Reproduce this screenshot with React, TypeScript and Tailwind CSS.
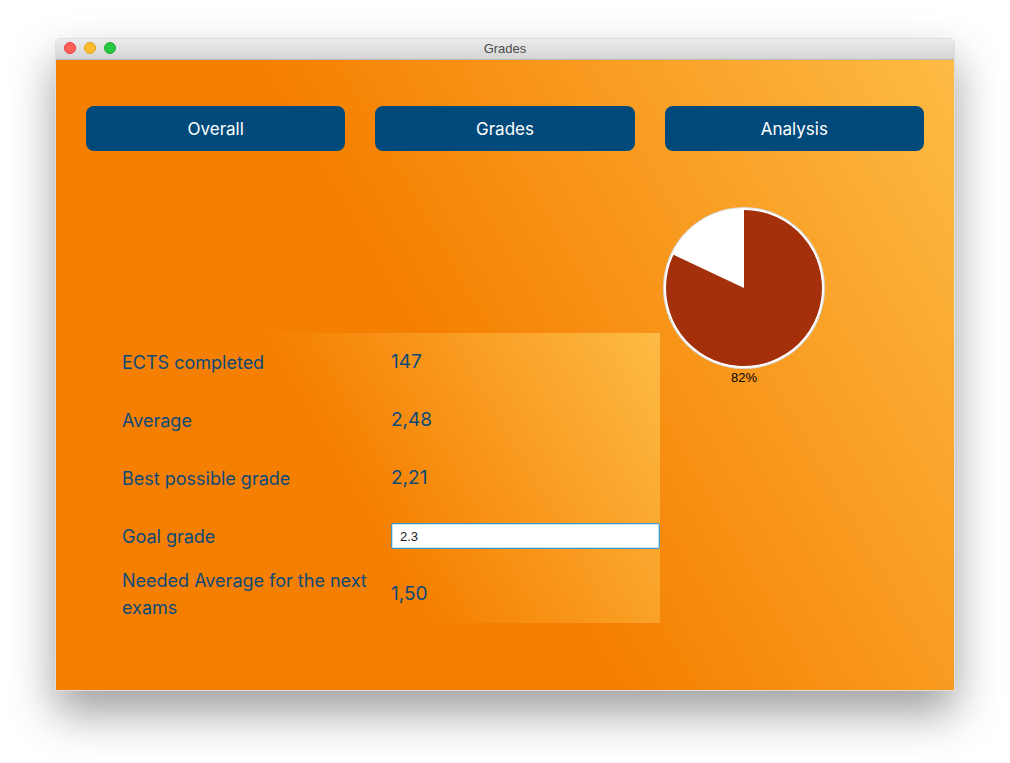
import React from 'react';

const rows: { label: string; value: string; input?: boolean }[] = [
  { label: 'ECTS completed', value: '147' },
  { label: 'Average', value: '2,48' },
  { label: 'Best possible grade', value: '2,21' },
  { label: 'Goal grade', value: '2.3', input: true },
  { label: 'Needed Average for the next exams', value: '1,50' },
];

const Pie: React.FC<{ pct: number }> = ({ pct }) => {
  const r = 78;
  const a = (pct / 100) * Math.PI * 2;
  const x = 82 + r * Math.sin(a);
  const y = 82 - r * Math.cos(a);
  const large = pct > 50 ? 1 : 0;
  return (
    <svg width="164" height="164" viewBox="0 0 164 164">
      <circle cx="82" cy="82" r="81" fill="#d9d9d9" />
      <circle cx="82" cy="82" r="80" fill="#ffffff" />
      <path d={`M82 82 L82 ${82 - r} A${r} ${r} 0 ${large} 1 ${x} ${y} Z`} fill="#a3300b" />
    </svg>
  );
};

export default function App() {
  return (
    <div className="w-[1010px] h-[763px] bg-white overflow-hidden font-['Inter',sans-serif]">
      <div className="ml-[55px] mt-[38px] w-[900px] rounded-t-[5px] overflow-hidden shadow-[0_22px_45px_rgba(0,0,0,0.38)] border border-[#c8c8c8]/60">
        {/* title bar */}
        <div className="relative h-[21px] bg-gradient-to-b from-[#ebebeb] to-[#d5d5d5] border-b border-[#b9b9b9] flex items-center justify-center">
          <div className="absolute left-[8px] top-[3px] flex gap-[8px]">
            <span className="w-[12px] h-[12px] rounded-full bg-[#fe5f57] border border-[#e0443e]" />
            <span className="w-[12px] h-[12px] rounded-full bg-[#febc2e] border border-[#dea123]" />
            <span className="w-[12px] h-[12px] rounded-full bg-[#28c840] border border-[#1aab29]" />
          </div>
          <span className="text-[13px] text-[#4d4d4d] font-['Liberation_Sans',sans-serif]">Grades</span>
        </div>

        {/* content */}
        <div className="h-[630px] bg-[linear-gradient(60deg,#f57f00_45%,#fdbb45_100%)]">
          <div className="flex gap-[30px] px-[30px] pt-[46px]">
            {['Overall', 'Grades', 'Analysis'].map((t) => (
              <button
                key={t}
                className="flex-1 h-[45px] rounded-[8px] bg-[#004a7b] text-white text-[17px] flex items-center justify-center pt-[2px]"
              >
                {t}
              </button>
            ))}
          </div>

          <div className="flex items-start">
            <div className="ml-[51px] mt-[182px] w-[553px] bg-[linear-gradient(60deg,#f57f00_45%,#fdbb45_100%)]">
              {rows.map((r) => (
                <div key={r.label} className="h-[58px] flex items-center">
                  <div className="w-[284px] pl-[15px] pr-[14px] text-[18px] leading-[27px] text-[#0c4a79]">{r.label}</div>
                  <div className="flex-1">
                    {r.input ? (
                      <input
                        readOnly
                        value={r.value}
                        className="w-full h-[26px] bg-white border border-[#3a9bcc] rounded-[2px] shadow-[inset_0_0_0_1px_#bfe3f5] px-[8px] text-[13px] text-[#222] font-['Liberation_Sans',sans-serif] outline-none"
                      />
                    ) : (
                      <span className="text-[19px] text-[#0c4a79]">{r.value}</span>
                    )}
                  </div>
                </div>
              ))}
            </div>

            <div className="ml-[2px] mt-[55px] flex flex-col items-center">
              <Pie pct={82} />
              <span className="-mt-[2px] text-[13px] text-black font-['Liberation_Sans',sans-serif]">82%</span>
            </div>
          </div>
        </div>
      </div>
    </div>
  );
}
